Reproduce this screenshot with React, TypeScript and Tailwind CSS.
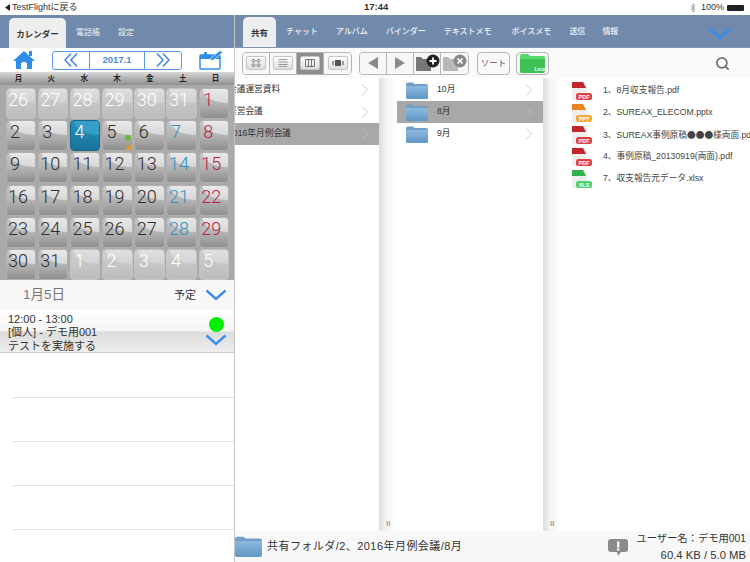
import React from "react";
import { ChevronRight, Search, Bluetooth } from "lucide-react";

const days = [
  [["26", 0], ["27", 0], ["28", 0], ["29", 0], ["30", 0], ["31", 0], ["1", 3]],
  [["2", 1], ["3", 1], ["4", 4], ["5", 1], ["6", 1], ["7", 2], ["8", 3]],
  [["9", 1], ["10", 1], ["11", 1], ["12", 1], ["13", 1], ["14", 2], ["15", 3]],
  [["16", 1], ["17", 1], ["18", 1], ["19", 1], ["20", 1], ["21", 2], ["22", 3]],
  [["23", 1], ["24", 1], ["25", 1], ["26", 1], ["27", 1], ["28", 2], ["29", 3]],
  [["30", 1], ["31", 1], ["1", 0], ["2", 0], ["3", 0], ["4", 0], ["5", 0]],
] as [string, number][][];

function Chevron({ w = 26, h = 14, sw = 3 }: { w?: number; h?: number; sw?: number }) {
  return (
    <svg width={w} height={h} viewBox={`0 0 ${w} ${h}`} fill="none">
      <path d={`M1.5 1.5 L${w / 2} ${h - 2} L${w - 1.5} 1.5`} stroke="#3b8ee8" strokeWidth={sw} />
    </svg>
  );
}

function Cell({ label, kind, date }: { label: string; kind: number; date?: boolean }) {
  const bg =
    kind === 4
      ? "bg-[linear-gradient(#2a93bc,#17729a)] border-[#0f6a90]"
      : kind === 0
        ? "bg-[linear-gradient(#cfcfcf,#bcbcbc)] border-[#c4c4c4]"
        : "bg-[linear-gradient(#c8c8c8_0%,#b4b4b4_50%,#8e8e8e_100%)] border-[#b0b0b0]";
  const color =
    kind === 0 || kind === 4 ? "text-white" : kind === 2 ? "text-[#2b93bf]" : kind === 3 ? "text-[#b81c4c]" : "text-[#2e2e2e]";
  return (
    <div className={`relative h-[31px] rounded-[4px] border overflow-hidden ${bg}`}>
      {kind !== 4 && (
        <div className={`absolute left-[3px] right-0 top-0 h-[14px] rounded-bl-[26px_14px] bg-[linear-gradient(#eeeeee,#dedede)] ${kind === 0 ? "opacity-50" : "opacity-85"}`} />
      )}
      {kind === 4 && <div className="absolute left-[4px] right-0 top-0 h-[14px] rounded-bl-[26px_14px] bg-[#3fa7cd] opacity-70" />}
      <div className={`relative ${label.length > 1 ? "pl-[1.5px]" : "pl-[3.5px]"} text-[18px] leading-[22px] font-[Roboto,sans-serif] font-light ${color}`}>
        {label}
      </div>
      {date && (
        <>
          <div className="absolute right-[1px] top-[14px] h-[6px] w-[6px] rounded-full bg-[#6cb83a]" />
          <div className="absolute bottom-0 right-0 h-0 w-0 border-b-[7px] border-l-[7px] border-b-[#e59a2c] border-l-transparent" />
        </>
      )}
    </div>
  );
}

function Folder({ w = 22, h = 17, cls = "" }: { w?: number; h?: number; cls?: string }) {
  return (
    <svg width={w} height={h} viewBox="0 0 22 17" className={cls}>
      <defs>
        <linearGradient id="fg" x1="0" y1="0" x2="0" y2="1">
          <stop offset="0" stopColor="#8db9dc" />
          <stop offset="1" stopColor="#5f97c6" />
        </linearGradient>
      </defs>
      <path d="M0 2.5 Q0 0.5 2 0.5 H7 L8.5 2 H20 Q22 2 22 4 V15 Q22 17 20 17 H2 Q0 17 0 15 Z" fill="#6f9fc6" />
      <path d="M0 4 H22 V15 Q22 17 20 17 H2 Q0 17 0 15 Z" fill="url(#fg)" />
    </svg>
  );
}

function FileIcon({ color, label, light }: { color: string; label: string; light: string }) {
  return (
    <svg width="22" height="20" viewBox="0 0 22 20" className="shrink-0">
      <path d="M1 1 H12 L16 5 V19 H1 Z" fill="#eeeeee" />
      <path d="M1 1 H12 L15 7 H1 Z" fill={color} />
      <rect x="5" y="12" width="16" height="7" rx="2.5" fill={light} />
      <text x="13" y="17.6" textAnchor="middle" fontSize="5.5" fontWeight="700" fill="#ffffff" fontFamily="Liberation Sans, sans-serif">
        {label}
      </text>
    </svg>
  );
}

function Tool({ active, children, w = 27 }: { active?: boolean; children?: React.ReactNode; w?: number }) {
  return (
    <div style={{ width: w }} className={`flex h-full items-center justify-center border-r border-[#b5b5b5] last:border-r-0 ${active ? "bg-[#8e8e8e]" : "bg-[#f7f7f7]"}`}>
      {children}
    </div>
  );
}

function InnerBox({ children }: { children: React.ReactNode }) {
  return <div className="flex h-[14px] w-[20px] items-center justify-center rounded-[2px] border border-[#c4c4c4] bg-[linear-gradient(#ffffff,#dddddd)]">{children}</div>;
}

function Row({ text, sel }: { text: string; sel?: boolean }) {
  return (
    <div className={`flex h-[22px] items-center justify-between pr-[4px] ${sel ? "bg-[#a8a8a8]" : ""}`}>
      <span className="-ml-[7px] text-[8.7px] whitespace-nowrap text-[#333333]">{text}</span>
      <ChevronRight size={20} strokeWidth={0.8} className={sel ? "text-[#c4c4c4]" : "text-[#b0b0b0]"} />
    </div>
  );
}

function Gutter() {
  return (
    <div className="flex w-[18px] shrink-0 flex-col justify-end bg-[linear-gradient(90deg,#dcdcdc,#f4f4f4_40%,#ffffff)] pb-[2px]">
      <div className="pl-[7px] text-[8px] leading-[10px] font-bold text-[#a0a0a0]">II</div>
    </div>
  );
}

const files: [string, string, string, React.ReactNode][] = [
  ["#c0272d", "PDF", "#e0413c", "1、8月収支報告.pdf"],
  ["#e8851f", "PPT", "#f2a93a", "2、SUREAX_ELECOM.pptx"],
  ["#c0272d", "PDF", "#e0413c", <>3、SUREAX事例原稿<span className="font-['Noto_Sans_CJK_JP',sans-serif]">●●●</span>様両面.pdf</>],
  ["#c0272d", "PDF", "#e0413c", "4、事例原稿_20130919(両面).pdf"],
  ["#2fb24c", "XLS", "#4fd06a", "7、収支報告元データ.xlsx"],
];

export default function App() {
  return (
    <div className="flex h-[562px] w-[750px] flex-col overflow-hidden bg-white font-['Liberation_Sans','Noto_Sans_CJK_JP',sans-serif] text-[#333333]">
      <div className="relative flex h-[15px] shrink-0 items-center justify-between bg-white px-[5px] text-[9px] text-[#333333]">
        <span className="flex items-center gap-[2px]">
          <svg width="5" height="7" viewBox="0 0 5 7" fill="#222222"><path d="M5 0 V7 L0 3.5 Z" /></svg>
          TestFlightに戻る
        </span>
        <span className="absolute left-[364px] text-[9.5px] font-bold">17:44</span>
        <div className="flex items-center gap-[3px]">
          <Bluetooth size={10} strokeWidth={1.5} className="text-[#777777]" />
          <span className="text-[9px]">100%</span>
          <div className="mr-[1px] h-[6px] w-[17px] rounded-[1px] bg-[#222222]" />
        </div>
      </div>
      <div className="flex min-h-0 flex-1">
        <div className="flex w-[235px] shrink-0 flex-col overflow-hidden border-r border-[#c4c4c4]">
          <div className="flex h-[33px] shrink-0 items-end bg-[#7189ab] pl-[9px]">
            <div className="flex h-[30px] w-[57px] items-center justify-center rounded-t-[5px] bg-[#eeeeee] pt-[3px] text-[8.5px] font-bold">カレンダー</div>
            <span className="ml-[10px] pb-[9px] text-[8px] text-[#eef2f7]">電話帳</span>
            <span className="ml-[18px] pb-[9px] text-[8px] text-[#eef2f7]">設定</span>
          </div>
          <div className="flex h-[24px] shrink-0 items-center bg-white pl-[13px] pr-[11px]">
            <svg width="22" height="20" viewBox="0 0 22 20">
              <path d="M11 1 L22 11 H19 V19 H14 V13 H8 V19 H3 V11 H0 Z" fill="#2f8fe8" />
              <rect x="16" y="1" width="3" height="5" fill="#2f8fe8" />
              <rect x="9" y="12" width="4" height="3" fill="#ffffff" />
            </svg>
            <div className="ml-[17px] flex h-[19px] w-[130px] items-center rounded-[3px] border border-[#5b9be8] text-[#4a8bdc]">
              <div className="flex h-full w-[37px] items-center justify-center border-r border-[#5b9be8]">
                <svg width="14" height="14" viewBox="0 0 14 14" fill="none" stroke="#4a8bdc" strokeWidth="1.6"><path d="M7 0.5 L1 7 L7 13.5 M13 0.5 L7 7 L13 13.5" /></svg>
              </div>
              <div className="flex-1 text-center text-[9.5px] font-bold">2017.1</div>
              <div className="flex h-full w-[37px] items-center justify-center border-l border-[#5b9be8]">
                <svg width="14" height="14" viewBox="0 0 14 14" fill="none" stroke="#4a8bdc" strokeWidth="1.6"><path d="M1 0.5 L7 7 L1 13.5 M7 0.5 L13 7 L7 13.5" /></svg>
              </div>
            </div>
            <svg width="24" height="20" viewBox="0 0 24 20" className="ml-auto">
              <rect x="1" y="5" width="20" height="14" rx="1" fill="#ffffff" stroke="#2f8fe8" strokeWidth="1.5" />
              <rect x="1" y="5" width="20" height="4" fill="#2f8fe8" />
              <rect x="5" y="2" width="3" height="5" rx="1" fill="#2f8fe8" />
              <path d="M12 8 L21 0.5 L23.5 2.5 L14.5 10 L11.5 11 Z" fill="#2f8fe8" stroke="#ffffff" strokeWidth="0.6" />
            </svg>
          </div>
          <div className="grid h-[13px] shrink-0 grid-cols-7 bg-[linear-gradient(#d8d8d8,#8f8f8f)] px-[2px] text-center text-[7.5px] leading-[14px] font-bold text-[#222222]">
            {["月", "火", "水", "木", "金", "土", "日"].map((d) => (
              <span key={d}>{d}</span>
            ))}
          </div>
          <div className="grid h-[195px] shrink-0 grid-cols-7 content-start gap-x-[1.7px] gap-y-[1.2px] bg-[#a9a9a9] pl-[5.5px] pr-[4.8px] pt-[3px]">
            {days.flat().map(([l, k], i) => (
              <Cell key={i} label={l} kind={k} date={i === 10} />
            ))}
          </div>
          <div className="flex h-[30px] shrink-0 items-center bg-[#f8f8f8] pl-[23px] pr-[7px]">
            <span className="text-[13.5px] text-[#777777]">1月5日</span>
            <span className="ml-auto mr-[9px] text-[11px] text-[#333333]">予定</span>
            <Chevron w={22} h={12} sw={2.4} />
          </div>
          <div className="relative h-[43px] shrink-0 border-b border-[#cccccc] bg-[linear-gradient(#ffffff_0%,#f4f4f4_50%,#dcdcdc_52%,#eeeeee_100%)] pl-[8px] pt-[3px] text-[11px] leading-[13.3px] text-[#333333]">
            <div>12:00 - 13:00</div>
            <div>[個人] - デモ用001</div>
            <div>テストを実施する</div>
            <div className="absolute right-[10px] top-[7px] h-[15px] w-[15px] rounded-full bg-[#00f000]" />
            <div className="absolute right-[7px] top-[24px]"><Chevron w={22} h={12} sw={2.4} /></div>
          </div>
          <div className="flex min-h-0 flex-1 flex-col pl-[12px] pt-[44px]">
            {[0, 1, 2, 3].map((i) => (
              <div key={i} className="mb-[43px] shrink-0 border-t border-[#e2e2e2]" />
            ))}
          </div>
        </div>
        <div className="flex min-w-0 flex-1 flex-col">
          <div className="flex h-[33px] shrink-0 items-end border-b border-[#8194b0] bg-[#7189ab] pl-[8px]">
            <div className="flex h-[30px] w-[33px] items-center justify-center rounded-t-[5px] bg-[#eeeeee] pt-[3px] text-[8.5px] font-bold">共有</div>
            {[
              ["チャット", "ml-[10px]"],
              ["アルバム", "ml-[18px]"],
              ["バインダー", "ml-[18px]"],
              ["テキストメモ", "ml-[18px]"],
              ["ボイスメモ", "ml-[20px]"],
              ["送信", "ml-[18px]"],
              ["情報", "ml-[17px]"],
            ].map(([t, m]) => (
              <span key={t} className={`${m} pb-[9px] text-[8px] font-medium whitespace-nowrap text-[#eef2f7]`}>{t}</span>
            ))}
            <div className="ml-auto mr-[18px] pb-[7px]"><Chevron w={24} h={13} sw={3} /></div>
          </div>
          <div className="flex h-[30px] shrink-0 items-center bg-[#fafafa] pl-[7px] pr-[20px]">
            <div className="flex h-[23px] items-center overflow-hidden rounded-[4px] border border-[#b5b5b5]">
              <Tool><InnerBox><svg width="10" height="8" viewBox="0 0 10 8" fill="none" stroke="#666666" strokeWidth="0.8"><rect x="1" y="0.5" width="3" height="2.5" rx="1" /><rect x="6" y="0.5" width="3" height="2.5" rx="1" /><rect x="1" y="5" width="3" height="2.5" rx="1" /><rect x="6" y="5" width="3" height="2.5" rx="1" /></svg></InnerBox></Tool>
              <Tool><InnerBox><svg width="10" height="8" viewBox="0 0 10 8" fill="none" stroke="#777777" strokeWidth="0.7"><path d="M0.5 0.5 H9.5 M0.5 3 H9.5 M0.5 5.5 H9.5 M0.5 7.7 H9.5" /></svg></InnerBox></Tool>
              <Tool active><InnerBox><svg width="10" height="8" viewBox="0 0 10 8" fill="none" stroke="#555555" strokeWidth="0.8"><path d="M0.5 0.5 H9.5 V7.5 H0.5 Z M3.5 0.5 V7.5 M6.5 0.5 V7.5" /></svg></InnerBox></Tool>
              <Tool><InnerBox><svg width="12" height="6" viewBox="0 0 12 6" fill="#555555"><rect x="3" y="0" width="6" height="6" /><rect x="0" y="1" width="2" height="4" fill="#999999" /><rect x="10" y="1" width="2" height="4" fill="#999999" /></svg></InnerBox></Tool>
            </div>
            <div className="ml-[7px] flex h-[23px] items-center overflow-hidden rounded-[4px] border border-[#b5b5b5]">
              <Tool><svg width="10" height="12" viewBox="0 0 10 12" fill="#8a8a8a"><path d="M10 0 V12 L0 6 Z" /></svg></Tool>
              <Tool><svg width="10" height="12" viewBox="0 0 10 12" fill="#8a8a8a"><path d="M0 0 V12 L10 6 Z" /></svg></Tool>
              <Tool>
                <svg width="25" height="18" viewBox="0 0 25 18">
                  <path d="M1 17 V3 H6 L8 5 H16 V17 Z" fill="#777777" />
                  <circle cx="18" cy="7" r="6.5" fill="#222222" />
                  <path d="M18 3.5 V10.5 M14.5 7 H21.5" stroke="#ffffff" strokeWidth="1.8" />
                </svg>
              </Tool>
              <Tool>
                <svg width="25" height="18" viewBox="0 0 25 18">
                  <path d="M1 17 V3 H6 L8 5 H16 V17 Z" fill="#b8b8b8" />
                  <circle cx="18" cy="7" r="6.5" fill="#8a8a8a" />
                  <path d="M15.5 4.5 L20.5 9.5 M20.5 4.5 L15.5 9.5" stroke="#ffffff" strokeWidth="1.6" />
                </svg>
              </Tool>
            </div>
            <div className="ml-[8px] flex h-[23px] w-[33px] items-center justify-center rounded-[4px] border border-[#b5b5b5] bg-[#f9f9f9] text-[8.5px] text-[#555555]">ソート</div>
            <div className="ml-[6px] flex h-[23px] w-[33px] items-center justify-center rounded-[4px] border border-[#b5b5b5] bg-[#f7f7f7]">
              <svg width="25" height="19" viewBox="0 0 25 19">
                <path d="M0 2 Q0 0 2 0 H8 L10 2 H23 Q25 2 25 4 V17 Q25 19 23 19 H2 Q0 19 0 17 Z" fill="#58d868" />
                <path d="M0 5 H25 V17 Q25 19 23 19 H2 Q0 19 0 17 Z" fill="#3fc255" />
                <text x="20.5" y="16.5" textAnchor="middle" fontSize="4.5" fontWeight="700" fill="#ffffff">Local</text>
              </svg>
            </div>
            <Search size={15} strokeWidth={2.8} className="ml-auto text-[#707070]" />
          </div>
          <div className="flex min-h-0 flex-1">
            <div className="w-[144px] shrink-0 overflow-hidden pt-[1px]">
              <Row text="会議運営資料" />
              <Row text="経営会議" />
              <Row text="2016年月例会議" sel />
            </div>
            <Gutter />
            <div className="w-[146px] shrink-0 pt-[1px]">
              {["10月", "8月", "9月"].map((t) => (
                <div key={t} className={`flex h-[22px] items-center pl-[9px] pr-[4px] ${t === "8月" ? "bg-[#a8a8a8]" : ""}`}>
                  <Folder />
                  <span className="ml-[9px] text-[8.7px]">{t}</span>
                  <ChevronRight size={20} strokeWidth={0.8} className={`ml-auto ${t === "8月" ? "text-[#c4c4c4]" : "text-[#b0b0b0]"}`} />
                </div>
              ))}
            </div>
            <Gutter />
            <div className="flex-1 overflow-hidden pl-[10px] pt-[2px]">
              {files.map(([c, l, li, t], i) => (
                <div key={i} className="flex h-[22px] items-center">
                  <FileIcon color={c} label={l} light={li} />
                  <span className="ml-[10px] text-[8.7px] whitespace-nowrap text-[#444444]">{t}</span>
                </div>
              ))}
            </div>
          </div>
          <div className="flex h-[31px] shrink-0 items-center bg-[#f8f8f8] pr-[4px]">
            <Folder w={27} h={21} />
            <span className="ml-[5px] text-[11px] tracking-[0.45px] text-[#333333]">共有フォルダ/2、2016年月例会議/8月</span>
            <svg width="22" height="20" viewBox="0 0 22 20" className="ml-auto">
              <path d="M4 2 H18 Q21 2 21 5 V12 Q21 15 18 15 H14 L11 19 L10 15 H4 Q1 15 1 12 V5 Q1 2 4 2 Z" fill="#8a8a8a" />
              <rect x="10" y="4.5" width="2.4" height="6" fill="#ffffff" />
              <rect x="10" y="11.5" width="2.4" height="2" fill="#ffffff" />
            </svg>
            <div className="ml-[7px] text-right leading-[17px] text-[#333333]">
              <div className="text-[10.3px]">ユーザー名：デモ用001</div>
              <div className="text-[11.3px]">60.4 KB / 5.0 MB</div>
            </div>
          </div>
        </div>
      </div>
    </div>
  );
}
